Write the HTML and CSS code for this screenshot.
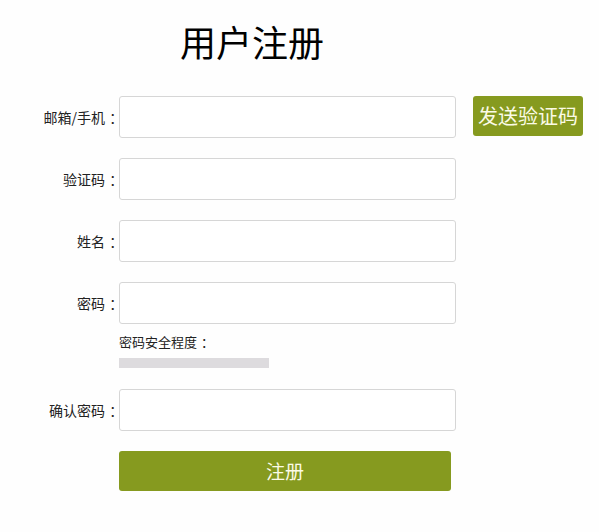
FILE: index.html
```html
<!DOCTYPE html>
<html lang="zh-CN">
<head>
<meta charset="utf-8">
<title>用户注册</title>
<link rel="stylesheet" href="styles.css">
</head>
<body>
<div class="page">
  <h1 class="title">用户注册</h1>
  <form class="form">
    <div class="row">
      <label class="label">邮箱/手机<span class="colon">：</span></label>
      <input class="field" type="text">
      <button class="send" type="button">发送验证码</button>
    </div>
    <div class="row">
      <label class="label">验证码<span class="colon">：</span></label>
      <input class="field" type="text">
    </div>
    <div class="row">
      <label class="label">姓名<span class="colon">：</span></label>
      <input class="field" type="text">
    </div>
    <div class="row">
      <label class="label">密码<span class="colon">：</span></label>
      <input class="field" type="password">
    </div>
    <div class="strength">
      <div class="strength-text">密码安全程度<span class="colon">：</span></div>
      <div class="strength-bar"></div>
    </div>
    <div class="row">
      <label class="label">确认密码<span class="colon">：</span></label>
      <input class="field" type="password">
    </div>
    <div class="submit-row">
      <button class="submit" type="button">注册</button>
    </div>
  </form>
</div>
</body>
</html>
```
FILE: styles.css
```css
html, body {
  margin: 0;
  padding: 0;
  background: #fefefe;
}
body {
  font-family: "Noto Sans CJK SC", "Noto Sans", sans-serif;
  color: #222;
}
.page {
  padding-top: 17px;
}
.title {
  margin: 0 0 31px 180px;
  font-size: 36px;
  font-weight: 400;
  line-height: 48px;
  color: #000;
}
.form {
  display: flex;
  flex-direction: column;
}
.row {
  display: flex;
  align-items: center;
  height: 42px;
  margin-bottom: 20px;
}
.label {
  width: 119px;
  text-align: right;
  font-size: 14px;
  color: #222;
}
.colon {
  display: inline-block;
  width: 1em;
  text-align: left;
  text-indent: 0.3em;
  white-space: nowrap;
}
.field {
  box-sizing: border-box;
  width: 337px;
  height: 42px;
  margin: 0;
  border: 1px solid #d6d6d6;
  border-radius: 3px;
  background: #fff;
  outline: none;
}
.send {
  align-self: flex-start;
  margin-left: 17px;
  width: 110px;
  height: 40px;
  border: none;
  border-radius: 3px;
  background: #869a1f;
  color: #fbfbe6;
  font-family: "Noto Sans CJK SC", sans-serif;
  font-size: 20px;
  padding: 0 0 2px;
}
.strength {
  margin: -12px 0 21px 119px;
}
.strength-text {
  font-size: 13px;
  line-height: 20px;
  color: #222;
}
.strength-bar {
  margin-top: 6px;
  width: 150px;
  height: 10px;
  background: #dddbde;
}
.submit-row {
  padding-left: 119px;
}
.submit {
  width: 332px;
  height: 40px;
  border: none;
  border-radius: 3px;
  background: #869a1f;
  color: #fbfbe6;
  font-family: "Noto Sans CJK SC", sans-serif;
  font-size: 19px;
  padding: 0 0 2px;
}
```
